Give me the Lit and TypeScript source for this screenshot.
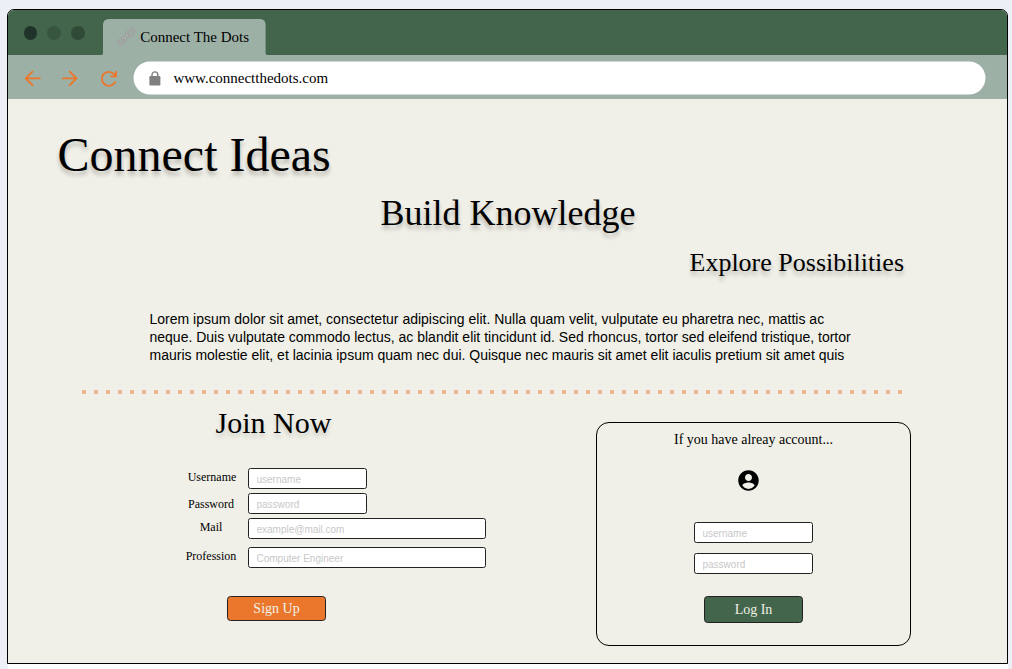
import { LitElement, html, css, svg } from "lit";
import { customElement, property } from "lit/decorators.js";

@customElement("text-field")
class TextField extends LitElement {
  @property() hint = "";
  @property() kind = "text";
  static styles = css`
    :host { display: block; height: 21px; }
    .box {
      box-sizing: border-box; display: block; width: 100%; height: 21px; margin: 0;
      padding: 2px 7.5px 1px; border: 1px solid #222; border-radius: 2.5px; background: #fff;
      font: 10px "Liberation Sans", Arial, sans-serif; color: #222; outline: none;
    }
    .box::placeholder { color: #c8c8c8; opacity: 1; }
  `;
  render() {
    return html`<input class="box" type=${this.kind} placeholder=${this.hint} />`;
  }
}

@customElement("browser-bar")
class BrowserBar extends LitElement {
  static styles = css`
    :host { display: block; font-family: "Liberation Serif", serif; font-size: 15px; color: #000; }
    .tabs { display: flex; height: 45px; background: #43654b; align-items: flex-end; }
    .dots { display: flex; gap: 10px; padding: 0 16.7px 15px 15.6px; }
    .dot { width: 13.8px; height: 13.8px; border-radius: 50%; background: #385540; }
    .dark { background: #20332a; }
    .mid { background: #304a38; }
    .tab {
      box-sizing: border-box; display: flex; align-items: center; width: 165px; height: 36px;
      padding: 0 0 0 15.5px; gap: 5px; line-height: 17px;
      background: no-repeat url("data:image/svg+xml,%3Csvg xmlns='http://www.w3.org/2000/svg' width='165' height='36'%3E%3Cpath d='M0 36Q1 35.5 1 34V6Q1 0 7 0H158Q163.6 0 163.6 6V34Q163.6 35.5 165 36Z' fill='%239db0a5'/%3E%3C/svg%3E");
    }
    .tools { display: flex; height: 44px; background: #9db0a5; align-items: flex-start; }
    .nav { width: 125px; flex: none; }
    .nav svg { display: block; }
    .address {
      box-sizing: border-box; display: flex; align-items: center; width: 853px; height: 34px; margin-top: 6px;
      padding-left: 15.7px;
      background: no-repeat url("data:image/svg+xml,%3Csvg xmlns='http://www.w3.org/2000/svg' width='853' height='34'%3E%3Crect x='.5' y='.5' width='852' height='33' rx='16.500' fill='white'/%3E%3C/svg%3E");
    }
    .lock { display: block; margin-right: 12.7px; }
    .url { line-height: 17px; }
  `;
  render() {
    return html`
      <div class="tabs">
        <div class="dots"><i class="dot dark"></i><i class="dot"></i><i class="dot mid"></i></div>
        <div class="tab">
          <svg width="18" height="18" viewBox="0 0 18 18" fill="none" stroke-linejoin="round" stroke-linecap="round">
            ${["#8b8d8c", "#b4b1b1"].map((c, i) => svg`
              <g stroke=${c} stroke-width=${i ? 1.1 : 1.9}>
                <rect x="-4" y="-2.3" width="8" height="4.6" rx="2.1" transform="translate(4.900 12.900) rotate(-40)" />
                <rect x="-4" y="-2.300" width="8" height="4.600" rx="2.100" transform="translate(13.100 4.900) rotate(-40)" />
                <path d="M7 11.200L11 6.800" />
              </g>`)}
          </svg>
          <span>Connect The Dots</span>
        </div>
      </div>
      <div class="tools">
        <div class="nav">
          <svg width="125" height="44" viewBox="0 0 125 44" fill="none" stroke="#eb772d" stroke-width="1.9" stroke-linecap="round" stroke-linejoin="round">
            <path d="M31.7 23.4H18M24.5 16.6L17.7 23.4L24.5 30.2" />
            <path d="M54.8 23.4H68.3M61.7 16.6L68.5 23.4L61.7 30.2" />
            <path d="M107 27.2A7 7 0 1 1 106 19.1L107.7 21M108 16.8V21.4H103.2" />
          </svg>
        </div>
        <div class="address">
          <svg class="lock" width="12" height="15" viewBox="0 0 12 15">
            <path d="M3 6V3.8a2.9 2.9 0 0 1 5.8 0V6" fill="none" stroke="#808080" stroke-width="1.4" />
            <rect x="0.4" y="5.1" width="11" height="9.4" rx="1.2" fill="#808080" />
          </svg>
          <span class="url">www.connectthedots.com</span>
        </div>
      </div>
    `;
  }
}

@customElement("app-root")
class AppRoot extends LitElement {
  static styles = css`
    :host {
      box-sizing: border-box; display: block; width: 1012px; height: 669px; overflow: hidden;
      padding: 9px 4px 0 7px; background: #eceff5;
      font-family: "Liberation Serif", "Times New Roman", serif; color: #000;
    }
    .window {
      box-sizing: border-box; width: 1001px; height: 655px; border: 1px solid #000;
      border-radius: 7px 7px 0 0; overflow: hidden; background: #f0f0e8;
    }
    .below { height: 5px; margin-left: 1px; background: #fff; }
    h1, h2, h3, p { margin: 0; font-weight: 400; }
    .hero { display: flex; flex-direction: column; text-shadow: 0 4px 4px rgba(0, 0, 0, 0.25); }
    .one { font-size: 48px; line-height: 56px; padding: 28px 0 0 49.5px; }
    .two { font-size: 36px; line-height: 42px; padding: 9px 0 0 372.5px; }
    .three { font-size: 26px; line-height: 30px; padding: 14px 0 0 681.5px; }
    .text {
      width: 715px; margin: 32px 0 0 141.5px; white-space: pre-line;
      font: 14px/18px "Liberation Sans", Arial, sans-serif;
    }
    .rule {
      height: 4px; width: 820px; margin: 26px 0 0 74px;
      background: repeating-linear-gradient(90deg, #edb492 0 4px, transparent 4px 12px);
    }
    .forms { display: flex; }
    .join { width: 588px; flex: none; }
    .join h2 {
      font-size: 30px; line-height: 34px; padding: 12px 0 0 207.5px;
      text-shadow: 0 4px 4px rgba(0, 0, 0, 0.15);
    }
    .row { display: flex; padding-left: 172.5px; font-size: 12px; line-height: 14px; }
    .label { width: 61px; text-align: center; margin-right: 6.5px; }
    .short { width: 119px; }
    .long { width: 238px; }
    .r1 { margin-top: 28px; } .r1 .label { margin-top: 2px; padding-left: 2px; width: 59px; }
    .r2 { margin-top: 4px; } .r2 .label { margin-top: 4px; }
    .r3 { margin-top: 4px; } .r3 .label { margin-top: 2px; }
    .r4 { margin-top: 8px; } .r4 .label { margin-top: 2px; }
    .btn {
      box-sizing: border-box; display: block; width: 99px; border: 1px solid #222; border-radius: 3.5px;
      font: 14px "Liberation Serif", serif; color: #f0f0e8; padding: 0;
    }
    .signup { height: 25px; margin: 28px 0 0 219px; background: #eb772d; }
    .login { height: 27px; margin-top: 22px; background: #43654b; }
    .card {
      box-sizing: border-box; width: 315px; height: 224px; margin-top: 28px; border: 1px solid #000;
      border-radius: 13px; display: flex; flex-direction: column; align-items: center;
    }
    .card p { font-size: 14px; line-height: 16px; margin-top: 9px; }
    .user { display: block; margin: 20px 10px 0 0; }
    .first { margin-top: 29px; }
    .second { margin-top: 10px; }
  `;
  render() {
    return html`
      <div class="window">
        <browser-bar></browser-bar>
        <div class="hero">
          <h1 class="one">Connect Ideas</h1>
          <h2 class="two">Build Knowledge</h2>
          <h3 class="three">Explore Possibilities</h3>
        </div>
        <p class="text">Lorem ipsum dolor sit amet, consectetur adipiscing elit. Nulla quam velit, vulputate eu pharetra nec, mattis ac
neque. Duis vulputate commodo lectus, ac blandit elit tincidunt id. Sed rhoncus, tortor sed eleifend tristique, tortor
mauris molestie elit, et lacinia ipsum quam nec dui. Quisque nec mauris sit amet elit iaculis pretium sit amet quis</p>
        <div class="rule"></div>
        <div class="forms">
          <div class="join">
            <h2>Join Now</h2>
            <div class="row r1"><span class="label">Username</span><text-field class="short" hint="username"></text-field></div>
            <div class="row r2"><span class="label">Password</span><text-field class="short" kind="password" hint="password"></text-field></div>
            <div class="row r3"><span class="label">Mail</span><text-field class="long" hint="example@mail.com"></text-field></div>
            <div class="row r4"><span class="label">Profession</span><text-field class="long" hint="Computer Engineer"></text-field></div>
            <button class="btn signup">Sign Up</button>
          </div>
          <div class="card">
            <p>If you have alreay account...</p>
            <svg class="user" width="25" height="25" viewBox="-0.2 -0.2 24.4 24.4">
              <path d="M12 2C6.48 2 2 6.48 2 12s4.48 10 10 10 10-4.48 10-10S17.52 2 12 2zm0 3.6c1.9 0 3.4 1.5 3.4 3.4s-1.5 3.5-3.4 3.5S8.6 10.9 8.6 9s1.5-3.4 3.4-3.4zm0 14.6c-2.5 0-4.71-1.28-6-3.22.03-1.99 4-3.08 6-3.08s5.97 1.09 6 3.08C16.71 18.92 14.5 20.2 12 20.2z" />
            </svg>
            <text-field class="short first" hint="username"></text-field>
            <text-field class="short second" kind="password" hint="password"></text-field>
            <button class="btn login">Log In</button>
          </div>
        </div>
      </div>
      <div class="below"></div>
    `;
  }
}
